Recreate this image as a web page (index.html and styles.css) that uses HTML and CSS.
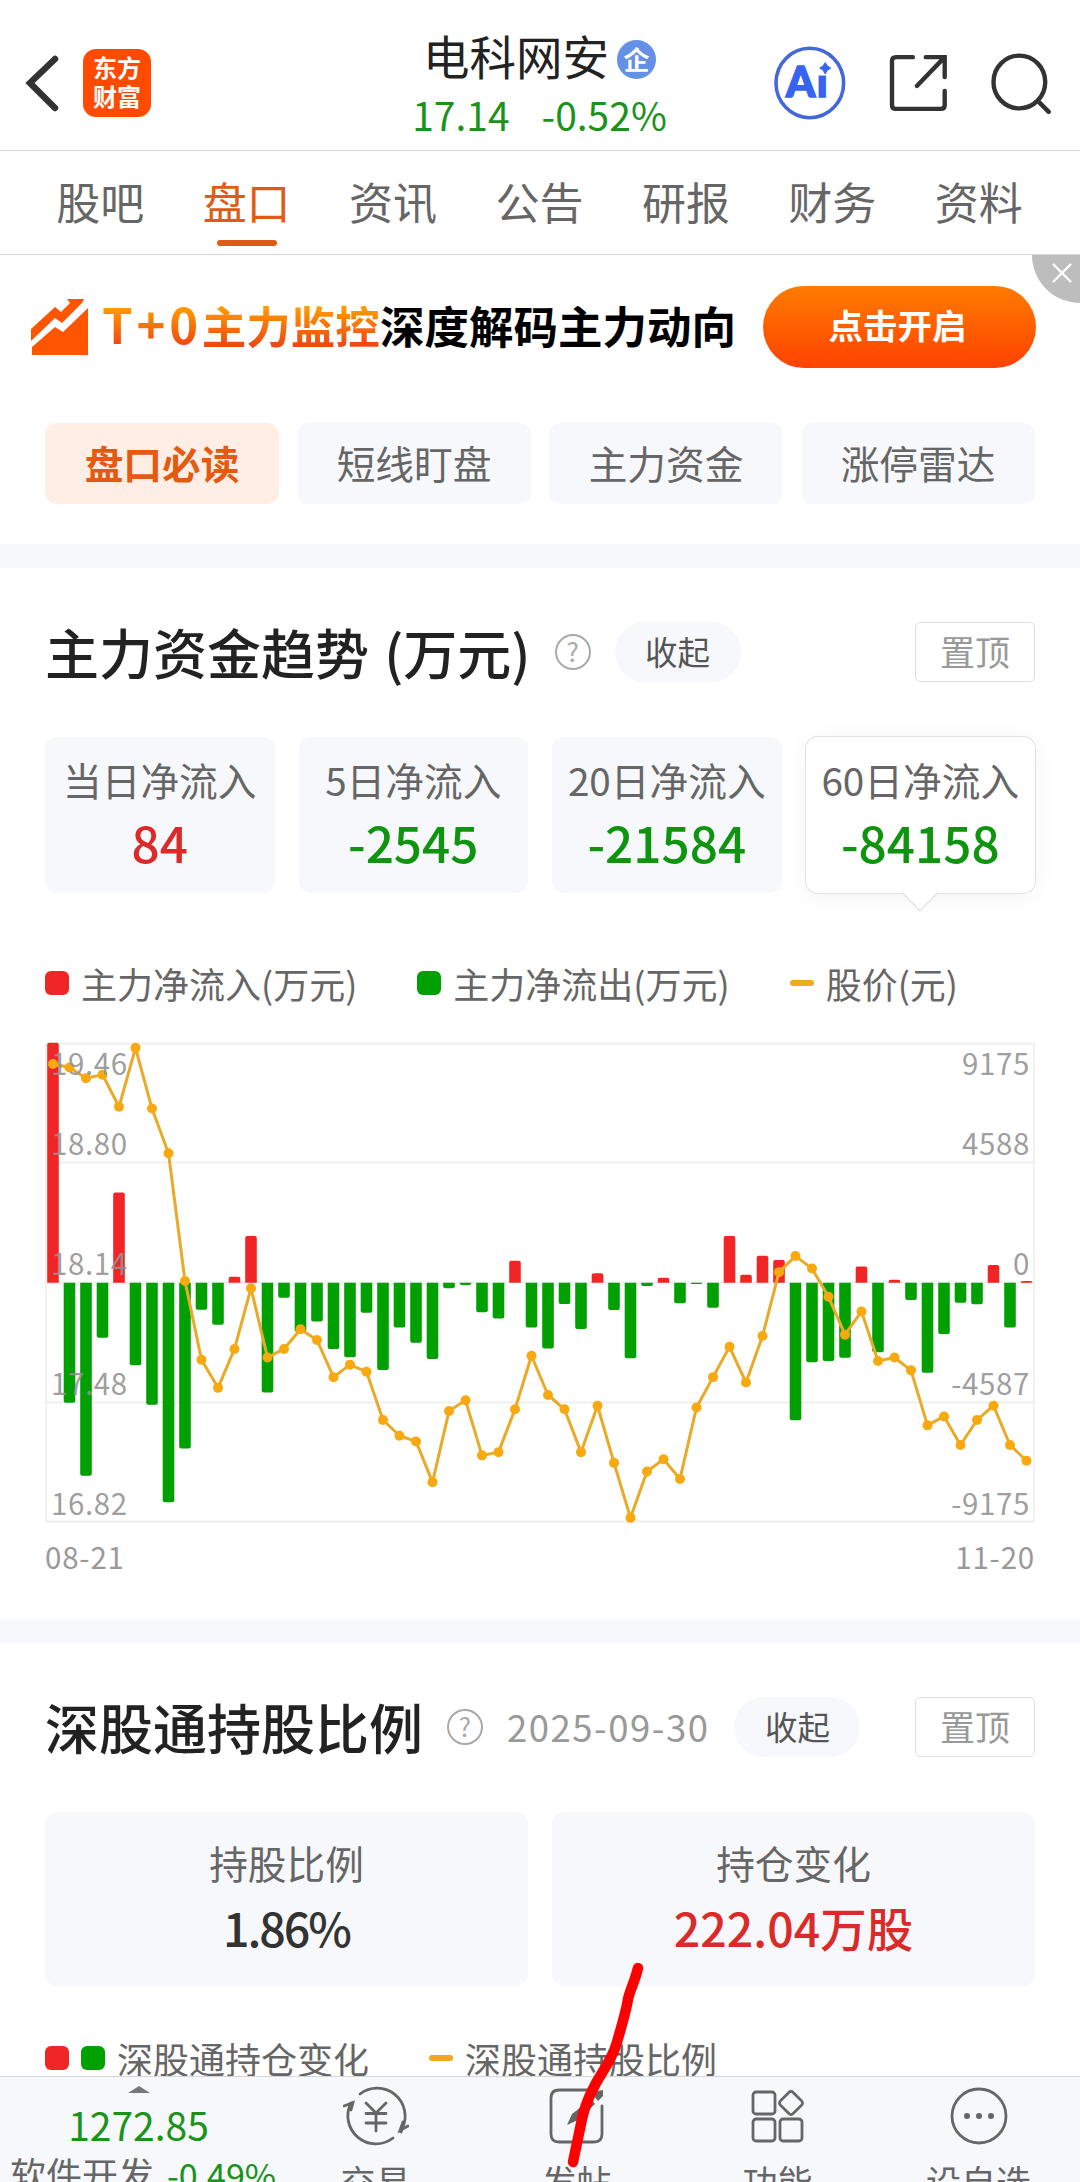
FILE: index.html
```html
<!DOCTYPE html>
<html lang="zh-CN">
<head>
  <meta charset="UTF-8">
  <meta name="viewport" content="width=device-width, initial-scale=1.0">
  <title>电科网安 - 盘口</title>
  <link rel="stylesheet" href="styles.css">
</head>
<body>

  <header class="header">
    <div class="header-left">
      <svg class="back" width="36" height="60" viewBox="0 0 36 60">
        <path d="M30 6 L5 30 L30 55" />
      </svg>
      <div class="logo"><span>东方</span><span>财富</span></div>
    </div>
    <div class="header-title">
      <div class="stock-name">电科网安<span class="badge">企</span></div>
      <div class="stock-price"><span>17.14</span><span>-0.52%</span></div>
    </div>
    <div class="header-icons">
      <svg width="72" height="74" viewBox="0 0 72 74">
        <ellipse cx="36" cy="37" rx="34" ry="35" fill="none" stroke="#4468d8" stroke-width="3.6" />
        <text class="ai-text" x="12" y="51">Ai</text>
        <!-- spark replaces the dot of the i -->
        <rect x="43" y="14" width="14" height="15.500" fill="#fff" />
        <path d="M51.500 16.500 Q53 20.500 57 22 Q53 23.500 51.500 28 Q50 23.500 46 22 Q50 20.500 51.500 16.500 Z" fill="#3663f0" stroke="#3663f0" />
      </svg>
      <svg class="line-icon" width="60" height="60" viewBox="0 0 60 60">
        <path d="M24 4 H7 Q3 4 3 8 V52 Q3 56 7 56 H52 Q56 56 56 52 V38" />
        <path d="M37 4 H56 V24 M55 5 L28 33" />
      </svg>
      <svg class="line-icon" width="62" height="62" viewBox="0 0 62 62">
        <ellipse cx="28.500" cy="30" rx="26" ry="26.500" />
        <path d="M47 49 L58 60" />
      </svg>
    </div>
  </header>

  <nav class="tabs">
    <a class="tab">股吧</a>
    <a class="tab active">盘口</a>
    <a class="tab">资讯</a>
    <a class="tab">公告</a>
    <a class="tab">研报</a>
    <a class="tab">财务</a>
    <a class="tab">资料</a>
  </nav>

  <section class="promo">
    <svg class="promo-icon" width="57" height="57" viewBox="0 0 57 57">
      <path d="M0 31 L24 9 L30 14 L39 5 L36 1 H53 L51 5 L31 25 L24 20 L0 43 Z" />
      <path d="M1 49 L24 29 L32 34 L57 10 V57 H1 Z" />
    </svg>
    <div class="promo-text"><span class="promo-hot"><span class="promo-t0">T+0</span>主力监控</span>深度解码主力动向</div>
    <button class="promo-btn">点击开启</button>
    <div class="promo-close">
      <svg width="22" height="22" viewBox="0 0 22 22"><path d="M2 2 L20 20 M20 2 L2 20" /></svg>
    </div>
  </section>

  <div class="pills">
    <a class="pill active">盘口必读</a>
    <a class="pill">短线盯盘</a>
    <a class="pill">主力资金</a>
    <a class="pill">涨停雷达</a>
  </div>

  <!-- Main capital trend -->
  <section class="panel panel-trend">
    <div class="panel-head">
      <h2>主力资金趋势 (万元)</h2>
      <span class="help">?</span>
      <span class="fold">收起</span>
      <span class="pin">置顶</span>
    </div>
    <div class="cards four">
      <div class="card"><p>当日净流入</p><b class="red">84</b></div>
      <div class="card"><p>5日净流入</p><b class="green">-2545</b></div>
      <div class="card"><p>20日净流入</p><b class="green">-21584</b></div>
      <div class="card selected"><p>60日净流入</p><b class="green">-84158</b></div>
    </div>
    <div class="legend">
      <span class="key"><i class="dot dot-red"></i>主力净流入(万元)</span>
      <span class="key"><i class="dot dot-green"></i>主力净流出(万元)</span>
      <span class="key"><i class="dash"></i>股价(元)</span>
    </div>
    <svg id="chart" class="chart" width="990" height="482" viewBox="0 0 990 482">
      <path class="grid" d="M1 1.500 H989 V479.500 H1 Z M1 120.500 H989 M1 240.500 H989 M1 360.500 H989" />
      <g id="bars"></g>
      <g id="price"></g>
      <g class="axis">
        <text x="6" y="32.500">19.46</text>
        <text x="6" y="112.500">18.80</text>
        <text x="6" y="232.500">18.14</text>
        <text x="6" y="352.500">17.48</text>
        <text x="6" y="472.500">16.82</text>
      </g>
      <g class="axis axis-right">
        <text x="985" y="32.500">9175</text>
        <text x="985" y="112.500">4588</text>
        <text x="985" y="232.500">0</text>
        <text x="985" y="352.500">-4587</text>
        <text x="985" y="472.500">-9175</text>
      </g>
    </svg>
    <div class="dates"><span>08-21</span><span>11-20</span></div>
  </section>

  <!-- Stock connect holding -->
  <section class="panel">
    <div class="panel-head">
      <h2>深股通持股比例</h2>
      <span class="help">?</span>
      <span class="date">2025-09-30</span>
      <span class="fold">收起</span>
      <span class="pin">置顶</span>
    </div>
    <div class="cards two">
      <div class="card"><p>持股比例</p><b class="tight">1.86%</b></div>
      <div class="card"><p>持仓变化</p><b class="red">222.04万股</b></div>
    </div>
    <div class="legend">
      <span class="key"><i class="dot dot-red"></i><i class="dot dot-green"></i>深股通持仓变化</span>
      <span class="key"><i class="dash"></i>深股通持股比例</span>
    </div>
  </section>

  <footer class="bottom-bar">
    <div class="index">
      <i class="caret"></i>
      <div class="index-value">1272.85</div>
      <div class="index-name">软件开发<span>-0.49%</span></div>
    </div>
    <div class="action">
      <svg width="66" height="60" viewBox="0 0 66 60">
        <path d="M17 8 A28 28 0 0 1 59 43 L58 46 M50 52 A28 28 0 0 1 8 17" />
        <path d="M1 20 L10 16.500 L8 24 M65 40 L57 44.500 L60 36" />
        <path d="M23 17 L33 27 L43 17 M23 27.500 H43 M23 37 H43 M33 27 V45" />
      </svg>
      <span>交易</span>
    </div>
    <div class="action">
      <svg width="60" height="60" viewBox="0 0 60 60">
        <path d="M50 4 H12 Q4 4 4 12 V48 Q4 56 12 56 H47 Q55 56 55 48 V20" />
        <path class="solid" d="M51 5 L56 4 L56 10 L51 15 L47 10 Z M44 13 L48 18 L31 34 L20 39 L25 28 Z" />
      </svg>
      <span>发帖</span>
    </div>
    <div class="action">
      <svg width="60" height="60" viewBox="0 0 60 60">
        <rect x="5" y="6" width="22" height="22" rx="3" />
        <rect x="5" y="33" width="22" height="22" rx="3" />
        <rect x="32" y="33" width="22" height="22" rx="3" />
        <rect x="34" y="8" width="18" height="18" rx="3" transform="rotate(45 43 17)" />
      </svg>
      <span>功能</span>
    </div>
    <div class="action">
      <svg width="60" height="60" viewBox="0 0 60 60">
        <circle cx="30" cy="30" r="27" />
        <circle class="solid" cx="18" cy="30" r="3" />
        <circle class="solid" cx="30" cy="30" r="3" />
        <circle class="solid" cx="42" cy="30" r="3" />
      </svg>
      <span>设自选</span>
    </div>
  </footer>

  <!-- Hand-drawn marker stroke -->
  <svg class="marker" width="90" height="210" viewBox="0 0 90 210">
    <path d="M78 8 C75 21 70 30 68 39 C66 52 61 68 57 82 C53 98 42 112 35 125 C29 136 25 145 22 159 L13 202" />
  </svg>

  <script>
    // Bar ends and price points, in chart units
    const top0 = 61.6;
    const unit = 2.8;
    const zero = 736;
    const flows = [
      64, 1072, 1276, 890, 483, 967, 1077, 1350, 1200, 811,
      853, 719, 605, 1043, 778, 873, 844, 921, 944, 820,
      980, 861, 904, 949, 751, 742, 818, 836, 674, 861,
      920, 795, 865, 709, 812, 947, 745, 722, 793, 739,
      806, 605, 713, 660, 672, 1121, 958, 955, 946, 690,
      930, 727, 784, 988, 879, 792, 796, 686, 861, 731
    ];
    const prices = [
      123, 133, 163, 153, 243, 78, 248, 373, 731, 951,
      1030, 921, 751, 945, 921, 866, 896, 1000, 965, 985,
      1120, 1164, 1180, 1294, 1095, 1065, 1219, 1210, 1090, 940,
      1050, 1090, 1210, 1080, 1240, 1394, 1264, 1230, 1285, 1085,
      1000, 915, 1015, 885, 706, 661, 696, 775, 881, 816,
      955, 945, 981, 1135, 1110, 1190, 1120, 1080, 1190, 1234
    ];
    const x = i => 8 + i * 16.5;
    const y = v => (v - top0) / unit;

    let bars = "";
    flows.forEach((v, i) => {
      const up = v < zero;
      const r = Math.min(2, Math.abs(v - zero) / unit);
      const end = y(v);
      const base = y(zero);
      const s = up ? 1 : -1;
      const l = x(i) - 5.8;
      bars += `<path class="${up ? "in" : "out"}" d="M${l} ${base} V${end + s * r} Q${l} ${end} ${l + r} ${end} H${l + 11.6 - r} Q${l + 11.6} ${end} ${l + 11.6} ${end + s * r} V${base} Z" />`;
    });
    document.getElementById("bars").innerHTML = bars;

    const points = prices.map((v, i) => `${x(i)},${y(v)}`).join(" ");
    let dots = "";
    prices.forEach((v, i) => {
      dots += `<circle cx="${x(i)}" cy="${y(v)}" r="5" />`;
    });
    document.getElementById("price").innerHTML = `<polyline points="${points}" />${dots}`;
  </script>

</body>
</html>
```
FILE: styles.css
```css
* {
  box-sizing: border-box;
}

body {
  position: relative;
  margin: 0;
  width: 1080px;
  height: 2182px;
  overflow: hidden;
  display: flex;
  flex-direction: column;
  background: #fff;
  color: #666;
  font-family: "Noto Sans CJK SC", sans-serif;
}

p, h2 {
  margin: 0;
}

/* Header */
.header {
  height: 151px;
  flex: none;
  display: grid;
  grid-template-columns: 300px 1fr 306px;
  border-bottom: 1px solid #d3d8d7;
}

.header-left {
  display: flex;
  align-items: center;
  padding: 16px 0 0 25px;
  gap: 22px;
}

.back {
  fill: none;
  stroke: #333;
  stroke-width: 6.5;
  stroke-linecap: round;
  stroke-linejoin: miter;
}

.logo {
  width: 68px;
  height: 68px;
  border-radius: 13px;
  background: #ff4a00;
  color: #fff;
  font-size: 24px;
  font-weight: 700;
  line-height: 29px;
  padding-top: 3px;
  display: flex;
  flex-direction: column;
  align-items: center;
}

.header-title {
  display: flex;
  flex-direction: column;
  align-items: center;
  padding: 27px 0 0 5px;
}

.stock-name {
  display: flex;
  align-items: center;
  gap: 8px;
  height: 56px;
  font-size: 46.5px;
  line-height: 56px;
  color: #222;
}

.badge {
  width: 39px;
  height: 39px;
  margin-top: 8px;
  border-radius: 50%;
  background: #6490e6;
  color: #fff;
  font-size: 26px;
  font-weight: 700;
  line-height: 37px;
  text-align: center;
}

.stock-price {
  display: flex;
  gap: 32px;
  font-size: 39px;
  line-height: 62px;
  color: #1b931b;
}

.header-icons {
  display: flex;
  align-items: center;
  justify-content: flex-end;
  gap: 43px;
  padding: 16px 27px 0 0;
}

.line-icon {
  fill: none;
  stroke: #333;
  stroke-width: 4.4;
  stroke-linecap: round;
}

.ai-text {
  font-family: Lato, sans-serif;
  font-size: 42px;
  font-weight: 900;
  letter-spacing: 1.5px;
  fill: #3663f0;
  stroke: #3663f0;
  stroke-width: 1.5;
}

/* Tabs */
.tabs {
  height: 104px;
  flex: none;
  display: flex;
  padding: 0 28px 0 27px;
  border-bottom: 1px solid #d3d8d7;
}

.tab {
  flex: 1;
  position: relative;
  text-align: center;
  font-size: 44px;
  line-height: 101px;
}

.tab.active {
  color: #dd5c16;
}

.tab.active::after {
  content: "";
  position: absolute;
  left: 50%;
  bottom: 8px;
  width: 60px;
  height: 6px;
  margin-left: -30px;
  border-radius: 3px;
  background: #dd5c16;
}

/* Promo banner */
.promo {
  position: relative;
  height: 143px;
  flex: none;
  display: flex;
  align-items: center;
  padding: 0 44px 0 31px;
  overflow: hidden;
}

.promo-icon {
  fill: #ff5400;
}

.promo-text {
  margin: 0 0 5px 14px;
  font-size: 44.5px;
  font-weight: 700;
  line-height: 60px;
  color: #000;
  white-space: nowrap;
}

.promo-hot {
  background: linear-gradient(#ff9a00 25%, #f04a12 80%);
  -webkit-background-clip: text;
  background-clip: text;
  color: transparent;
}

.promo-t0 {
  font-size: 49px;
  letter-spacing: 3.8px;
}

.promo-btn {
  width: 273px;
  height: 82px;
  margin-left: auto;
  padding: 0 4px 6px 0;
  border: none;
  border-radius: 41px;
  background: linear-gradient(#ff7b00, #ff4200);
  color: #fff;
  font-family: inherit;
  font-size: 34.5px;
  font-weight: 700;
}

.promo-close {
  position: absolute;
  top: 0;
  right: 0;
  width: 48px;
  height: 48px;
  border-bottom-left-radius: 48px;
  background: #bdbdbd;
  padding: 7px 0 0 19px;
}

.promo-close svg {
  display: block;
  fill: none;
  stroke: #fff;
  stroke-width: 2.4;
}

/* Pills */
.pills {
  flex: none;
  display: flex;
  gap: 18px;
  padding: 25px 45px 40px;
}

.pill {
  flex: 1;
  height: 81px;
  border-radius: 12px;
  background: #f7f8fb;
  text-align: center;
  font-size: 38.7px;
  line-height: 78px;
}

.pill.active {
  background: #ffeee6;
  color: #e45a10;
  font-weight: 700;
}

/* Panels */
.panel {
  flex: none;
  padding: 54px 45px 0;
  border-top: 24px solid #f7f8fb;
}

.panel-trend {
  height: 1075px;
}

.panel-head {
  height: 60px;
  display: flex;
  align-items: center;
}

.panel-head h2 {
  font-size: 54px;
  font-weight: 500;
  line-height: 56px;
  word-spacing: 3px;
  color: #222;
  white-space: nowrap;
}

.help {
  width: 36px;
  height: 36px;
  margin: 0 24px 0 24px;
  border: 2.5px solid #aaa;
  border-radius: 50%;
  color: #aaa;
  font-size: 26px;
  line-height: 30px;
  text-align: center;
}

.date {
  margin-right: 25px;
  font-size: 36.5px;
  letter-spacing: 1.5px;
  line-height: 54px;
  color: #999;
}

.fold {
  width: 126px;
  height: 60px;
  border-radius: 30px;
  background: #f7f8fb;
  color: #555;
  font-size: 32.5px;
  line-height: 57px;
  text-align: center;
}

.pin {
  width: 120px;
  height: 60px;
  margin-left: auto;
  border: 1px solid #dedede;
  border-radius: 5px;
  color: #999;
  font-size: 35px;
  line-height: 56px;
  text-align: center;
}

.cards {
  display: grid;
  margin-top: 55px;
  gap: 24px;
}

.four {
  grid-template-columns: repeat(4, 1fr);
}

.two {
  grid-template-columns: repeat(2, 1fr);
}

.card {
  position: relative;
  height: 156px;
  padding-top: 15px;
  border-radius: 12px;
  background: #f7f8fb;
  text-align: center;
}

.card p {
  font-size: 38.7px;
  line-height: 54px;
}

.card b {
  display: block;
  font-size: 49.5px;
  font-weight: 500;
  line-height: 72px;
  color: #333;
}

.card b.red {
  color: #db2a2a;
}

.card b.green {
  color: #0f940f;
}

.two .card {
  height: 174px;
  padding-top: 23px;
}

.two .card b {
  font-size: 46.5px;
  line-height: 76px;
}

.two .card b.tight {
  letter-spacing: -2px;
}

.card.selected {
  background: #fff;
  box-shadow: 0 0 0 1px #e2e2e2, 0 4px 26px rgba(0, 0, 0, 0.05);
}

.card.selected::after {
  content: "";
  position: absolute;
  left: 50%;
  bottom: -13px;
  width: 25px;
  height: 25px;
  margin-left: -13px;
  border: solid #dcdcdc;
  border-width: 0 1px 1px 0;
  background: linear-gradient(135deg, transparent 50%, #fff 50%);
  transform: rotate(45deg);
}

/* Legend */
.legend {
  display: flex;
  gap: 60px;
  height: 40px;
  margin-top: 70px;
}

.two + .legend {
  margin-top: 52px;
}

.key {
  display: flex;
  align-items: center;
  font-size: 36px;
  line-height: 36px;
  white-space: nowrap;
}

.dot {
  width: 24px;
  height: 24px;
  margin-right: 12px;
  border-radius: 6px;
}

.dot-red {
  background: #f12525;
}

.dot-green {
  background: #00a000;
}

.dash {
  width: 24px;
  height: 6px;
  margin-right: 12px;
  border-radius: 3px;
  background: #eda920;
}

/* Chart */
.chart {
  display: block;
  margin-top: 39px;
}

.grid {
  fill: none;
  stroke: #f0f0f0;
  stroke-width: 1.8;
}

.in {
  fill: #f12525;
}

.out {
  fill: #00a000;
}

#price polyline {
  fill: none;
  stroke: #e9aa28;
  stroke-width: 3;
  stroke-linejoin: round;
}

#price circle {
  fill: #f8a90f;
}

.axis text {
  font-size: 29.5px;
  letter-spacing: 0.6px;
  fill: #929292;
  fill-opacity: 0.9;
}

.axis-right text {
  text-anchor: end;
}

.dates {
  display: flex;
  justify-content: space-between;
  margin-top: 12px;
  font-size: 29.5px;
  letter-spacing: 0.8px;
  line-height: 40px;
  color: #999;
}

/* Bottom bar */
.bottom-bar {
  position: fixed;
  left: 0;
  top: 2076px;
  width: 1080px;
  height: 106px;
  display: grid;
  grid-template-columns: 275px repeat(4, 201px);
  border-top: 1px solid #d3d8d7;
  background: #f6f8fb;
  overflow: hidden;
}

.index {
  display: flex;
  flex-direction: column;
  align-items: center;
  padding: 9px 0 0 2px;
  white-space: nowrap;
}

.caret {
  border: solid transparent;
  border-width: 0 11px 7px;
  border-bottom-color: #777;
}

.index-value {
  font-size: 39px;
  line-height: 62px;
  color: #1b931b;
}

.index-name {
  margin-left: 9px;
  font-size: 36px;
  line-height: 36px;
}

.index-name span {
  margin-left: 13px;
  font-size: 34px;
  color: #1b931b;
}

.action {
  display: flex;
  flex-direction: column;
  align-items: center;
  padding-top: 9px;
  font-size: 35px;
}

.action svg {
  flex: none;
  fill: none;
  stroke: #666;
  stroke-width: 2.8;
  stroke-linecap: round;
}

.action .solid {
  fill: #666;
  stroke: none;
}

.action span {
  line-height: 50px;
  margin-top: 10px;
}

/* Marker */
.marker {
  position: absolute;
  left: 560px;
  top: 1960px;
  z-index: 2;
  fill: none;
  stroke: #f00;
  stroke-width: 10.5;
  stroke-linecap: round;
}
```
